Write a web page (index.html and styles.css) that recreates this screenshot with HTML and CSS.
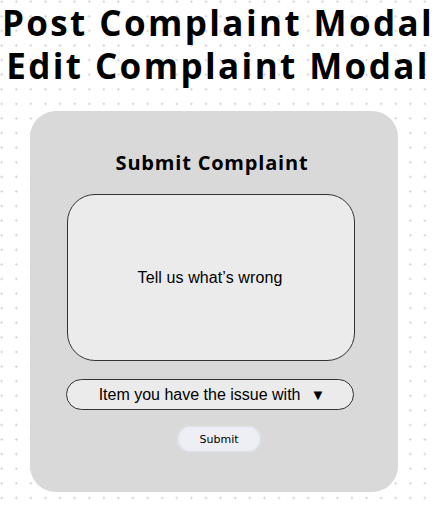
FILE: index.html
```html
<!DOCTYPE html>
<html lang="en">
<head>
  <meta charset="UTF-8" />
  <meta name="viewport" content="width=device-width, initial-scale=1.0"/>
  <title>Complaint Modals</title>
  <link rel="stylesheet" href="styles.css">
</head>
<body>
  <h1 class="page-title">Post Complaint Modal<br>Edit Complaint Modal</h1>

  <div class="modal">
    <h2 class="modal-title">Submit Complaint</h2>

    <div class="complaint-box">Tell us what’s wrong</div>

    <div class="item-select">Item you have the issue with <span class="arrow">▼</span></div>

    <button class="submit-btn">Submit</button>
  </div>
</body>
</html>
```

FILE: styles.css
```css
html, body {
  margin: 0;
  height: 100%;
}

body {
  font-family: 'Open Sans', sans-serif;
  color: #000;
  background-color: #fff;
  background-image: radial-gradient(circle, #cfd2d8 0.9px, transparent 1.3px);
  background-size: 14.6px 14.6px;
  background-position: -5.6px -5.6px;
  overflow: hidden;
}

.page-title {
  margin: 0;
  padding-top: 1px;
  font-size: 35px;
  line-height: 43px;
  font-weight: 700;
  letter-spacing: 2.4px;
  text-align: center;
  white-space: nowrap;
}

.modal {
  box-sizing: border-box;
  width: 368px;
  height: 381px;
  margin: 24px 0 0 30px;
  background: #d9d9d9;
  border-radius: 26px;
  padding-top: 38px;
  display: flex;
  flex-direction: column;
  align-items: center;
}

.modal-title {
  margin: 0 0 17px -4px;
  font-size: 20px;
  line-height: 28px;
  font-weight: 700;
  letter-spacing: 0.8px;
}

.complaint-box {
  box-sizing: border-box;
  width: 288px;
  height: 167px;
  margin-left: -6px;
  background: #ebebeb;
  border: 1px solid #333;
  border-radius: 28px;
  display: flex;
  align-items: center;
  justify-content: center;
  font-family: 'Liberation Sans', sans-serif;
  font-size: 16px;
  letter-spacing: 0.1px;
  padding: 0 2px 0 0;
}

.item-select {
  box-sizing: border-box;
  width: 288px;
  height: 31px;
  margin: 18px 0 0 -8px;
  background: #ebebeb;
  border: 1px solid #333;
  border-radius: 16px;
  display: flex;
  align-items: center;
  justify-content: center;
  font-family: 'Liberation Sans', sans-serif;
  font-size: 16px;
  padding-left: 4px;
}

.arrow {
  margin-left: 10px;
  font-size: 15px;
}

.submit-btn {
  width: 86px;
  height: 26px;
  margin: 16px 0 0 10px;
  background: #edeff4;
  border: none;
  border-radius: 13px;
  box-shadow: inset 2px 0 2px #d6d9e0, inset -2px 0 2px #d6d9e0;
  font-family: 'DejaVu Sans', sans-serif;
  font-size: 11px;
  color: #000;
  padding: 0;
}
```
